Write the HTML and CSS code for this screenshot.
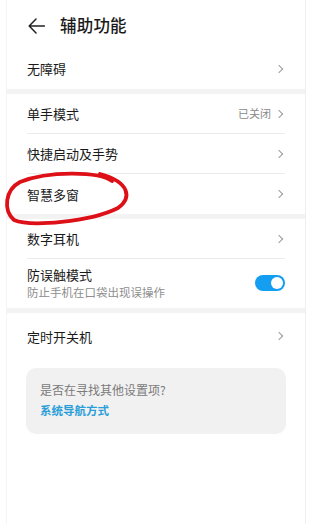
FILE: index.html
```html
<!DOCTYPE html>
<html lang="zh-CN">
<head>
<meta charset="utf-8">
<title>辅助功能</title>
<link rel="stylesheet" href="styles.css">
</head>
<body>
<div class="screen">
  <header class="header">
    <svg class="back" width="17" height="16" viewBox="0 0 17 16"><path d="M8 1 L1.2 8 L8 15 M1.2 8 H16.5" fill="none" stroke="#222" stroke-width="1.5" stroke-linecap="round" stroke-linejoin="round"/></svg>
    <h1 class="title">辅助功能</h1>
  </header>

  <section class="group">
    <div class="row row-first"><span class="label">无障碍</span><span class="chev"></span></div>
  </section>
  <div class="band"></div>

  <section class="group">
    <div class="row divided"><span class="label">单手模式</span><span class="right"><span class="value">已关闭</span><span class="chev"></span></span></div>
    <div class="row divided"><span class="label">快捷启动及手势</span><span class="chev"></span></div>
    <div class="row"><span class="label">智慧多窗</span><span class="chev"></span></div>
  </section>
  <div class="band"></div>

  <section class="group">
    <div class="row divided"><span class="label">数字耳机</span><span class="chev"></span></div>
    <div class="row row-tall">
      <div class="stack">
        <span class="label">防误触模式</span>
        <span class="sub">防止手机在口袋出现误操作</span>
      </div>
      <span class="toggle"><span class="knob"></span></span>
    </div>
  </section>
  <div class="band"></div>

  <section class="group">
    <div class="row row-last"><span class="label">定时开关机</span><span class="chev"></span></div>
  </section>

  <div class="card">
    <p class="card-q">是否在寻找其他设置项?</p>
    <p class="card-link">系统导航方式</p>
  </div>

  <svg class="circle" width="140" height="70" viewBox="0 0 140 70"><path d="M112 21 C 100 12, 50 10, 20 22 C 5 30, 3 50, 14 60 C 30 67, 90 62, 118 48 C 132 38, 130 22, 100 14" fill="none" stroke="#dd0f17" stroke-width="3.8" stroke-linecap="round"/></svg>
</div>
</body>
</html>
```

FILE: styles.css
```css
* { box-sizing: border-box; }
html, body { margin: 0; padding: 0; background: #fff; }
body { font-family: "Noto Sans CJK SC", "Noto Sans", sans-serif; color: #1a1a1a; }
.screen {
  position: relative;
  margin-left: 6px;
  width: 300px;
  min-height: 524px;
  border-left: 1px solid #f4f4f4;
  border-right: 1px solid #efefef;
}
.header {
  height: 48px;
  display: flex;
  align-items: center;
  padding-left: 21px;
  padding-top: 3px;
}
.back { display: block; margin-right: 15px; }
.title { margin: 0; font-size: 16.5px; font-weight: 500; line-height: 1; letter-spacing: 0.2px; }
.group { padding: 0 20px; }
.row {
  height: 40px;
  display: flex;
  align-items: center;
  justify-content: space-between;
}
.row-first { height: 41px; }
.divided { border-bottom: 1px solid #ececec; }
.row-tall { height: 49px; padding-bottom: 1px; }
.row-last { height: 46px; }
.label { font-size: 13px; line-height: 1; }
.right { display: flex; align-items: center; gap: 5px; }
.value { font-size: 11px; color: #8a8a8a; line-height: 1; }
.chev {
  width: 6px; height: 6px;
  border-right: 1.2px solid #9a9a9a;
  border-top: 1.2px solid #9a9a9a;
  transform: rotate(45deg);
  margin-right: 3px;
}
.band { height: 5px; background: #f3f3f3; }
.stack { display: flex; flex-direction: column; gap: 5px; }
.sub { font-size: 11.5px; color: #8e8e8e; line-height: 1.1; }
.toggle {
  width: 30px; height: 16px;
  border-radius: 8px;
  background: #149ef2;
  display: flex; align-items: center; justify-content: flex-end;
  padding-right: 2px;
}
.knob { width: 12px; height: 12px; border-radius: 50%; background: #fff; }
.card {
  margin: 9px 19px 0;
  height: 66px;
  border-radius: 10px;
  background: #f1f1f1;
  padding: 16px 14px 0;
}
.card-q { margin: 0; font-size: 12px; color: #7a7a7a; line-height: 1; }
.card-link { margin: 9px 0 0; font-size: 11.5px; color: #2a9ed8; font-weight: 700; line-height: 1; }
.circle { position: absolute; left: -7px; top: 160px; }
```
